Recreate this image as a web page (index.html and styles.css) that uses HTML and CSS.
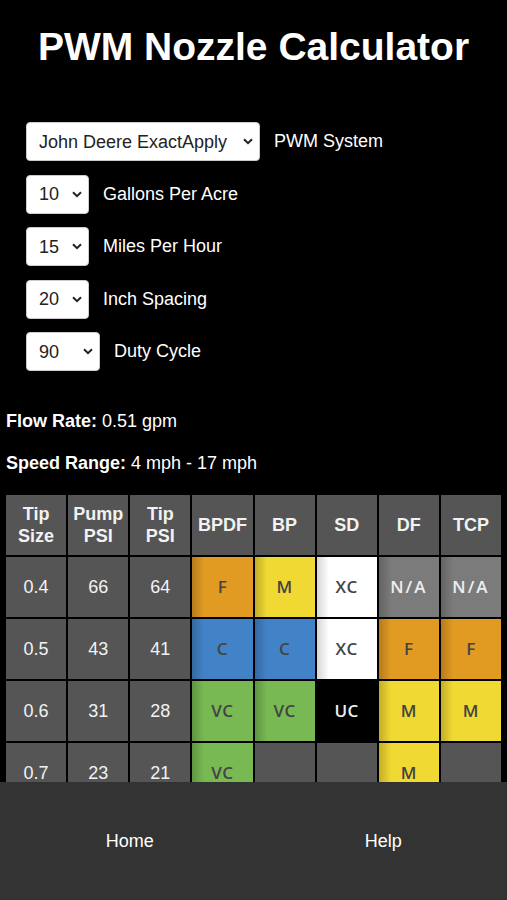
FILE: index.html
```html
<!DOCTYPE html>
<html lang="en">
<head>
<meta charset="utf-8">
<title>PWM Nozzle Calculator</title>
<link rel="stylesheet" href="styles.css">
</head>
<body>
<h1 class="title">PWM Nozzle Calculator</h1>

<div class="form">
  <div class="row">
    <span class="select-wrap w-system">
      <select class="select"><option>John Deere ExactApply</option></select>
      <svg class="chev" viewBox="0 0 10 7" width="10" height="7"><path d="M1 1.2 L5 5.2 L9 1.2" fill="none" stroke="#222" stroke-width="2"/></svg>
    </span>
    <span class="label">PWM System</span>
  </div>
  <div class="row">
    <span class="select-wrap w-small">
      <select class="select"><option>10</option></select>
      <svg class="chev" viewBox="0 0 10 7" width="10" height="7"><path d="M1 1.2 L5 5.2 L9 1.2" fill="none" stroke="#222" stroke-width="2"/></svg>
    </span>
    <span class="label">Gallons Per Acre</span>
  </div>
  <div class="row">
    <span class="select-wrap w-small">
      <select class="select"><option>15</option></select>
      <svg class="chev" viewBox="0 0 10 7" width="10" height="7"><path d="M1 1.2 L5 5.2 L9 1.2" fill="none" stroke="#222" stroke-width="2"/></svg>
    </span>
    <span class="label">Miles Per Hour</span>
  </div>
  <div class="row">
    <span class="select-wrap w-small">
      <select class="select"><option>20</option></select>
      <svg class="chev" viewBox="0 0 10 7" width="10" height="7"><path d="M1 1.2 L5 5.2 L9 1.2" fill="none" stroke="#222" stroke-width="2"/></svg>
    </span>
    <span class="label">Inch Spacing</span>
  </div>
  <div class="row">
    <span class="select-wrap w-duty">
      <select class="select"><option>90</option></select>
      <svg class="chev" viewBox="0 0 10 7" width="10" height="7"><path d="M1 1.2 L5 5.2 L9 1.2" fill="none" stroke="#222" stroke-width="2"/></svg>
    </span>
    <span class="label">Duty Cycle</span>
  </div>
</div>

<div class="info">
  <p class="line"><b>Flow Rate:</b> 0.51 gpm</p>
  <p class="line"><b>Speed Range:</b> 4 mph - 17 mph</p>
</div>

<table class="grid">
  <thead>
    <tr>
      <th>Tip<br>Size</th>
      <th>Pump<br>PSI</th>
      <th>Tip<br>PSI</th>
      <th>BPDF</th>
      <th>BP</th>
      <th>SD</th>
      <th>DF</th>
      <th>TCP</th>
    </tr>
  </thead>
  <tbody>
    <tr>
      <td>0.4</td><td>66</td><td>64</td>
      <td class="c c-f">F</td><td class="c c-m">M</td><td class="c c-xc">XC</td><td class="c c-na">N/A</td><td class="c c-na">N/A</td>
    </tr>
    <tr>
      <td>0.5</td><td>43</td><td>41</td>
      <td class="c c-c">C</td><td class="c c-c">C</td><td class="c c-xc">XC</td><td class="c c-f">F</td><td class="c c-f">F</td>
    </tr>
    <tr>
      <td>0.6</td><td>31</td><td>28</td>
      <td class="c c-vc">VC</td><td class="c c-vc">VC</td><td class="c c-uc">UC</td><td class="c c-m">M</td><td class="c c-m">M</td>
    </tr>
    <tr>
      <td>0.7</td><td>23</td><td>21</td>
      <td class="c c-vc">VC</td><td></td><td></td><td class="c c-m">M</td><td></td>
    </tr>
  </tbody>
</table>

<nav class="footer">
  <a class="nav-link" href="#">Home</a>
  <a class="nav-link" href="#">Help</a>
</nav>
</body>
</html>
```

FILE: styles.css
```css
html, body {
  margin: 0;
  padding: 0;
  background: #000;
  color: #fff;
  font-family: "Liberation Sans", Arial, sans-serif;
}

.title {
  margin: 0;
  padding-top: 24px;
  font-size: 39px;
  line-height: 46px;
  font-weight: bold;
  text-align: center;
}

.form {
  margin-top: 52px;
  padding-left: 26px;
  display: flex;
  flex-direction: column;
  gap: 13.5px;
}

.row {
  display: flex;
  align-items: center;
  gap: 14px;
}

.select-wrap {
  position: relative;
  display: inline-block;
  height: 39px;
}

.w-system { width: 234px; }
.w-small { width: 63px; }
.w-duty { width: 74px; }

.select {
  appearance: none;
  -webkit-appearance: none;
  width: 100%;
  height: 39px;
  margin: 0;
  border: 1px solid #ccc;
  border-radius: 4px;
  background: #fff;
  color: #222;
  font-family: "Liberation Sans", Arial, sans-serif;
  font-size: 18px;
  padding: 0 0 0 12px;
  box-sizing: border-box;
}

.chev {
  position: absolute;
  right: 7px;
  top: 16px;
  pointer-events: none;
}

.label {
  font-size: 18px;
  color: #fff;
}

.info {
  margin-top: 39px;
  padding-left: 6px;
  display: flex;
  flex-direction: column;
  gap: 20px;
}

.line {
  margin: 0;
  font-size: 18px;
  line-height: 22px;
}

.grid {
  margin: 19px 0 0 4px;
  width: 499px;
  table-layout: fixed;
  border-collapse: separate;
  border-spacing: 2px;
  background: #000;
}

.grid th,
.grid td {
  height: 60px;
  padding: 0;
  background: #555;
  color: #f2f2f2;
  text-align: center;
  vertical-align: middle;
  font-size: 18px;
  line-height: 22px;
}

.grid th {
  font-weight: bold;
}

.grid td.c {
  font-family: "Open Sans", "Liberation Sans", sans-serif;
  font-weight: 600;
  font-size: 17px;
  color: #444;
  letter-spacing: 0.5px;
  background-image: linear-gradient(to right, rgba(0,0,0,0.2), rgba(0,0,0,0) 12px);
}

.grid td.c-f { background-color: #e19a22; }
.grid td.c-m { background-color: #f1d933; }
.grid td.c-c { background-color: #4283c7; }
.grid td.c-vc { background-color: #78b953; }
.grid td.c-xc { background-color: #fff; background-image: linear-gradient(to right, rgba(0,0,0,0.16), rgba(0,0,0,0) 12px); }
.grid td.c-uc { background-color: #000; color: #eee; background-image: none; }
.grid td.c-na { background-color: #7b7b7b; color: #eee; letter-spacing: 2px; }

.footer {
  position: fixed;
  left: 0;
  right: 0;
  bottom: 0;
  height: 118px;
  background: #333;
  display: grid;
  grid-template-columns: 1fr 1fr;
  align-items: center;
  justify-items: center;
}

.nav-link {
  color: #fff;
  text-decoration: none;
  font-size: 18px;
  padding-left: 6px;
}
```
